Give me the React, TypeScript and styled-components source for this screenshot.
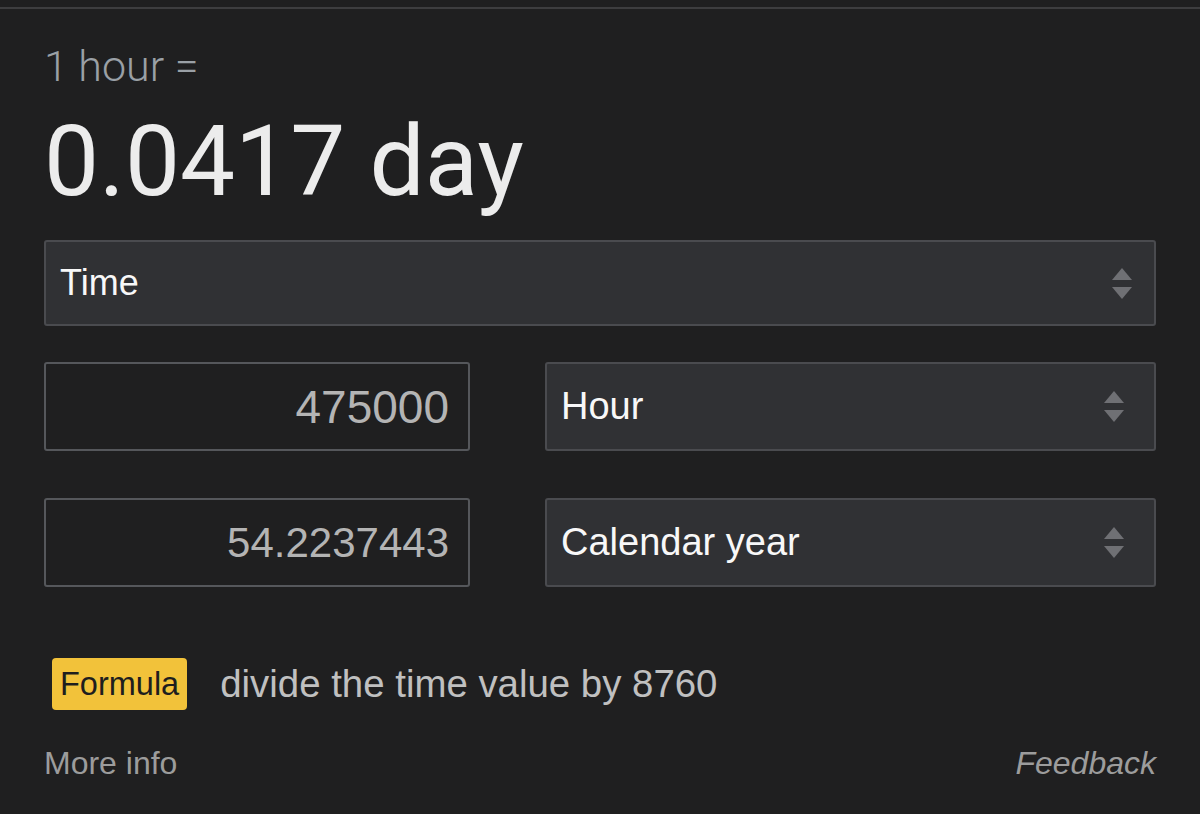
import React from 'react';
import styled, { createGlobalStyle } from 'styled-components';

const GlobalStyle = createGlobalStyle`
  html, body {
    margin: 0;
    padding: 0;
    background: #1f1f20;
  }
  body {
    font-family: "Liberation Sans", Arial, sans-serif;
  }
`

const Page = styled.div`
  width: 1200px;
  height: 814px;
  overflow: hidden;
  background: #1f1f20;
`

const TopRule = styled.div`
  margin-top: 7px;
  height: 2px;
  background: #3d3d3f;
`

const Card = styled.div`
  padding: 0 44px;
`

const Question = styled.div`
  margin-top: 31px;
  font-family: Roboto, "Liberation Sans", sans-serif;
  font-weight: 300;
  font-size: 43px;
  line-height: 52px;
  color: #9aa0a6;
`

const Answer = styled.div`
  margin-top: 14px;
  font-family: Roboto, "Liberation Sans", sans-serif;
  font-size: 98px;
  line-height: 112px;
  color: #ececec;
`

const Select = styled.div<{ $size?: number; $top?: number; $arrowRight?: number }>`
  box-sizing: border-box;
  display: flex;
  align-items: center;
  justify-content: space-between;
  height: ${p => (p.$top !== undefined ? 86 : 89)}px;
  margin-top: ${p => p.$top ?? 0}px;
  padding: 0 ${p => p.$arrowRight ?? 24}px 0 14px;
  background: #303134;
  border: 2px solid #4a4b4f;
  border-radius: 3px;
  color: #f8f8f8;
  font-size: ${p => p.$size ?? 38}px;
`

const Row = styled.div<{ $top: number }>`
  display: grid;
  grid-template-columns: 426px 1fr;
  column-gap: 75px;
  margin-top: ${p => p.$top}px;
`

const NumberBox = styled.input<{ $size: number }>`
  box-sizing: border-box;
  width: 100%;
  height: 89px;
  margin: 0;
  padding: 0 19px 0 14px;
  background: #1f1f20;
  border: 2px solid #55575b;
  border-radius: 3px;
  outline: none;
  text-align: right;
  font-family: "Liberation Sans", Arial, sans-serif;
  font-size: ${p => p.$size}px;
  color: #b4b4b4;
`

const FormulaRow = styled.div`
  display: flex;
  align-items: center;
  gap: 33px;
  margin-top: 71px;
  margin-left: 8px;
`

const Badge = styled.span`
  display: inline-flex;
  align-items: center;
  height: 52px;
  padding: 0 8px;
  border-radius: 4px;
  background: #f2c23a;
  color: #1e1e1e;
  font-size: 32.5px;
`

const FormulaText = styled.span`
  font-size: 38.4px;
  color: #c0c0c0;
`

const Footer = styled.div`
  display: flex;
  justify-content: space-between;
  align-items: baseline;
  margin-top: 35px;
  font-size: 32px;
  color: #9c9c9c;
`

const FeedbackLink = styled.span`
  font-style: italic;
`

const Arrows = () => (
  <svg width="20" height="31" viewBox="0 0 20 31">
    <polygon points="10,0 20,12 0,12" fill="#6f7074" />
    <polygon points="0,19 20,19 10,31" fill="#6f7074" />
  </svg>
)

const App = (): JSX.Element => (
  <Page>
    <GlobalStyle />
    <TopRule />
    <Card>
      <Question>1 hour =</Question>
      <Answer>0.0417 day</Answer>
      <Select $size={36} $top={22} $arrowRight={22}>
        <span>Time</span>
        <Arrows />
      </Select>
      <Row $top={36}>
        <NumberBox $size={46} readOnly value="475000" />
        <Select $arrowRight={30}>
          <span>Hour</span>
          <Arrows />
        </Select>
      </Row>
      <Row $top={47}>
        <NumberBox $size={42} readOnly value="54.2237443" />
        <Select $arrowRight={30}>
          <span>Calendar year</span>
          <Arrows />
        </Select>
      </Row>
      <FormulaRow>
        <Badge>Formula</Badge>
        <FormulaText>divide the time value by 8760</FormulaText>
      </FormulaRow>
      <Footer>
        <span>More info</span>
        <FeedbackLink>Feedback</FeedbackLink>
      </Footer>
    </Card>
  </Page>
);

export default App;
